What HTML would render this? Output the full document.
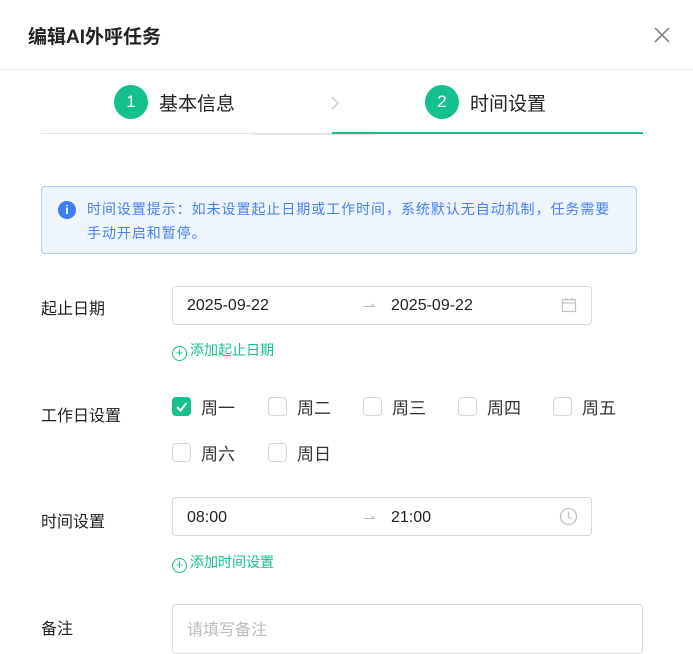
<!DOCTYPE html>
<html><head><meta charset="utf-8"><style>
*{box-sizing:border-box;margin:0;padding:0}
body{width:693px;height:640px;overflow:hidden;background:#fff;font-family:"Liberation Sans","Noto Sans CJK SC",sans-serif;color:#222;position:relative}
.a{position:absolute}
.title{left:28px;top:22px;font-size:19px;font-weight:bold;color:#222}
.circ{width:34px;height:34px;border-radius:50%;background:#13c08e;color:#fff;font-size:17px;text-align:center;line-height:34px}
.step{font-size:19px;color:#222}
.lbl{font-size:16px;color:#222;left:41px}
.inp{border:1px solid #d9d9d9;border-radius:4px;background:#fff}
.v{font-size:16px;color:#222}
.cb{width:19px;height:19px;border:1px solid #d5d5d5;border-radius:4px;background:#fff}
.ck{font-size:17px;color:#333}
.add{font-size:14px;color:#13c08e;left:172px}
.add i{display:inline-block;width:15px;height:15px;border:1.3px solid #13c08e;border-radius:50%;font-style:normal;font-size:13px;line-height:12px;text-align:center;margin-right:3px;vertical-align:-2px}
</style></head><body>
<div class="a title">编辑AI外呼任务</div>
<svg class="a" style="left:653px;top:26px" width="18" height="18"><path d="M2 2L16 16M16 2L2 16" stroke="#888" stroke-width="1.6"/></svg>
<div class="a" style="left:0;top:69px;width:693px;height:1px;background:#ececec"></div>
<div class="a circ" style="left:114px;top:85px">1</div>
<div class="a step" style="left:159px;top:89px">基本信息</div>
<svg class="a" style="left:329px;top:95px" width="12" height="16"><path d="M3 2L9 8L3 14" fill="none" stroke="#c8c8c8" stroke-width="1.3"/></svg>
<div class="a circ" style="left:425px;top:85px">2</div>
<div class="a step" style="left:470px;top:89px">时间设置</div>
<div class="a" style="left:41px;top:133px;width:291px;height:1px;background:#e4e4e4"></div>
<div class="a" style="left:253px;top:134px;width:122px;height:1px;background:#e4e4e4"></div>
<div class="a" style="left:332px;top:132px;width:311px;height:2px;background:#13c08e"></div>
<div class="a" style="left:41px;top:186px;width:596px;height:68px;background:#eef5fe;border:1px solid #b2d0fa;border-radius:4px"></div>
<div class="a" style="left:58px;top:201px;width:18px;height:18px;border-radius:50%;background:#3e7ef7;color:#fff;font-size:12px;font-weight:bold;text-align:center;line-height:18px">i</div>
<div class="a" style="left:87px;top:197px;width:540px;font-size:14px;letter-spacing:0.95px;line-height:24px;color:#4a80f0;white-space:nowrap">时间设置提示：如未设置起止日期或工作时间，系统默认无自动机制，任务需要<br>手动开启和暂停。</div>

<div class="a lbl" style="top:295px">起止日期</div>
<div class="a inp" style="left:172px;top:286px;width:420px;height:39px"></div>
<div class="a v" style="left:187px;top:297px">2025-09-22</div>
<div class="a" style="left:363px;top:297px;color:#bbb;font-size:15px">⇀</div>
<div class="a v" style="left:391px;top:297px">2025-09-22</div>
<svg class="a" style="left:561px;top:297px" width="16" height="16"><rect x="1.5" y="2.5" width="13" height="12" fill="none" stroke="#c4c4c4" stroke-width="1.2"/><path d="M1.5 6h13M5 1v3M11 1v3" stroke="#c4c4c4" stroke-width="1.2"/></svg>
<div class="a add" style="top:340px"><i>+</i>添加起止日期</div>

<div class="a lbl" style="top:402px">工作日设置</div>
<div class="a cb" style="left:172px;top:397px;background:#13c08e;border-color:#13c08e"><svg width="17" height="17"><path d="M4 9L7.5 12.5L13.5 5" fill="none" stroke="#fff" stroke-width="2"/></svg></div>
<div class="a ck" style="left:201px;top:394px">周一</div>
<div class="a cb" style="left:268px;top:397px"></div><div class="a ck" style="left:297px;top:394px">周二</div>
<div class="a cb" style="left:363px;top:397px"></div><div class="a ck" style="left:392px;top:394px">周三</div>
<div class="a cb" style="left:458px;top:397px"></div><div class="a ck" style="left:487px;top:394px">周四</div>
<div class="a cb" style="left:553px;top:397px"></div><div class="a ck" style="left:582px;top:394px">周五</div>
<div class="a cb" style="left:172px;top:443px"></div><div class="a ck" style="left:201px;top:440px">周六</div>
<div class="a cb" style="left:268px;top:443px"></div><div class="a ck" style="left:297px;top:440px">周日</div>

<div class="a lbl" style="top:508px">时间设置</div>
<div class="a inp" style="left:172px;top:497px;width:420px;height:39px"></div>
<div class="a v" style="left:187px;top:509px">08:00</div>
<div class="a" style="left:363px;top:509px;color:#bbb;font-size:15px">⇀</div>
<div class="a v" style="left:391px;top:509px">21:00</div>
<svg class="a" style="left:559px;top:507px" width="19" height="19"><circle cx="9.5" cy="9.5" r="8" fill="none" stroke="#c4c4c4" stroke-width="1.3"/><path d="M9.5 5v5l3 2" fill="none" stroke="#c4c4c4" stroke-width="1.3"/></svg>
<div class="a add" style="top:552px"><i>+</i>添加时间设置</div>

<div class="a lbl" style="top:615px">备注</div>
<div class="a inp" style="left:172px;top:604px;width:471px;height:50px"></div>
<div class="a" style="left:187px;top:616px;font-size:16px;color:#bbb">请填写备注</div>
</body></html>
